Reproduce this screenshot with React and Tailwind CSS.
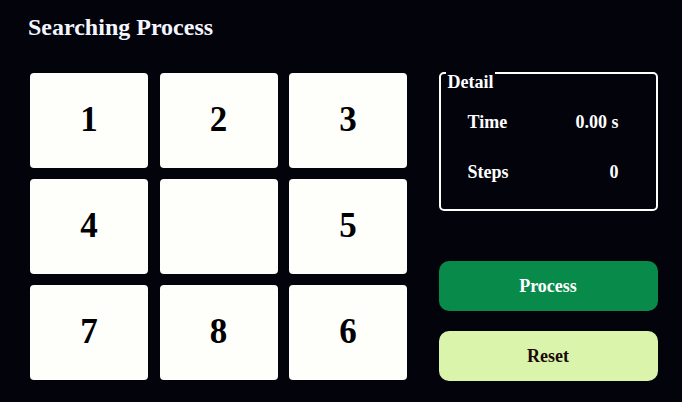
import React from "react";

const tiles = ["1", "2", "3", "4", "", "5", "7", "8", "6"];

export default function App() {
  return (
    <div
      className="w-[682px] h-[402px] overflow-hidden bg-[#03030c] pt-[13px] pl-[28px] text-white"
      style={{ fontFamily: '"Liberation Serif", "Times New Roman", serif' }}
    >
      <h1 className="text-[24px] leading-[28px] font-bold text-[#f4f6ff]">Searching Process</h1>
      <div className="flex items-start mt-[31px]">
        <div className="ml-[2px] mt-[1px] w-[377px] grid grid-cols-3 gap-x-[11.5px] gap-y-[11px]">
          {tiles.map((t, i) => (
            <div
              key={i}
              className="h-[95px] rounded-[4px] bg-[#fefefb] flex items-center justify-center text-[35px] font-bold text-black"
            >
              {t}
            </div>
          ))}
        </div>
        <div className="ml-[31.5px] w-[219px] flex flex-col">
          <div className="relative h-[139px] border-2 border-white rounded-[5px]">
            <span className="absolute -top-[2px] left-[5px] px-[2px] bg-[#03030c] text-[18px] leading-[20px] font-bold text-white">
              Detail
            </span>
            <div className="ml-[27px] pt-[38px] w-[151px] flex flex-col gap-[29.5px] text-[18px] leading-[20px] font-bold">
              <div className="flex justify-between">
                <span>Time</span>
                <span>0.00 s</span>
              </div>
              <div className="flex justify-between">
                <span>Steps</span>
                <span>0</span>
              </div>
            </div>
          </div>
          <button className="mt-[50px] h-[50px] rounded-[10px] bg-[#078a4a] text-[18px] font-bold text-white">
            Process
          </button>
          <button className="mt-[20px] h-[50px] rounded-[10px] bg-[#daf4ab] text-[18px] font-bold text-[#1a0a0a]">
            Reset
          </button>
        </div>
      </div>
    </div>
  );
}
